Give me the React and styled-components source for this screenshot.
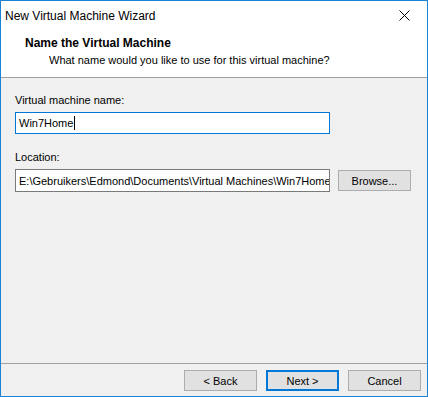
import React from 'react'
import styled, { createGlobalStyle } from 'styled-components'

const GlobalStyle = createGlobalStyle`
  html, body {
    margin: 0;
    padding: 0;
    background: #ffffff;
  }
  body {
    font-family: "Liberation Sans", Arial, sans-serif;
    font-size: 11px;
    color: #000000;
  }
`

const Window = styled.div`
  box-sizing: border-box;
  width: 428px;
  height: 397px;
  border: 1px solid #1883d7;
  display: flex;
  flex-direction: column;
  background: #f0f0f0;
`
const TitleBar = styled.div`
  height: 29px;
  background: #ffffff;
  display: flex;
  align-items: center;
  justify-content: space-between;
  padding-left: 4px;
`
const TitleText = styled.span`
  font-size: 12px;
  color: #000000;
`
const CloseButton = styled.div`
  width: 46px;
  height: 29px;
  display: flex;
  align-items: center;
  justify-content: center;
`
const Header = styled.div`
  height: 48px;
  background: #ffffff;
  border-bottom: 1px solid #a0a0a0;
  padding: 5px 0 0 24px;
  box-sizing: border-box;
`
const HeaderTitle = styled.div`
  font-weight: bold;
  font-size: 12px;
  line-height: 16px;
`
const HeaderSub = styled.div`
  padding-left: 24px;
  line-height: 16px;
  margin-top: 1px;
`
const Body = styled.div`
  flex: 1;
  padding: 14px 0 0 14px;
  display: flex;
  flex-direction: column;
`
const Label = styled.div`
  line-height: 16px;
  margin-top: ${({ top }) => top || 0}px;
  margin-bottom: 4px;
`
const Row = styled.div`
  display: flex;
  align-items: center;
  gap: 8px;
`
const TextBox = styled.div`
  box-sizing: border-box;
  width: 315px;
  height: ${({ tall }) => (tall ? 23 : 22)}px;
  background: #ffffff;
  border: 1px solid ${({ focused }) => (focused ? '#0078d7' : '#7a7a7a')};
  padding: 0 3px;
  display: flex;
  align-items: center;
  white-space: nowrap;
  overflow: hidden;
`
const Caret = styled.span`
  display: inline-block;
  width: 1px;
  height: 14px;
  background: #000000;
  margin-left: 1px;
`
const Button = styled.div`
  box-sizing: border-box;
  width: 73px;
  height: 21px;
  background: #e1e1e1;
  border: ${({ primary }) => (primary ? '2px solid #0078d7' : '1px solid #adadad')};
  display: flex;
  align-items: center;
  justify-content: center;
`
const Footer = styled.div`
  height: 33px;
  border-top: 1px solid #a0a0a0;
  display: flex;
  justify-content: flex-end;
  align-items: flex-start;
  gap: 9px;
  padding: 6px 6px 0 0;
  box-sizing: border-box;
`

export default function App() {
  return (
    <>
      <GlobalStyle />
      <Window>
        <TitleBar>
          <TitleText>New Virtual Machine Wizard</TitleText>
          <CloseButton>
            <svg width="11" height="11" viewBox="0 0 11 11">
              <path d="M0.5 0.5 L10.5 10.5 M10.5 0.5 L0.5 10.5" stroke="#000" strokeWidth="1" fill="none" />
            </svg>
          </CloseButton>
        </TitleBar>
        <Header>
          <HeaderTitle>Name the Virtual Machine</HeaderTitle>
          <HeaderSub>What name would you like to use for this virtual machine?</HeaderSub>
        </Header>
        <Body>
          <Label>Virtual machine name:</Label>
          <TextBox focused>
            Win7Home<Caret />
          </TextBox>
          <Label top={15}>Location:</Label>
          <Row>
            <TextBox tall>E:\Gebruikers\Edmond\Documents\Virtual Machines\Win7Home</TextBox>
            <Button>Browse...</Button>
          </Row>
        </Body>
        <Footer>
          <Button>&lt; Back</Button>
          <Button primary>Next &gt;</Button>
          <Button>Cancel</Button>
        </Footer>
      </Window>
    </>
  )
}
